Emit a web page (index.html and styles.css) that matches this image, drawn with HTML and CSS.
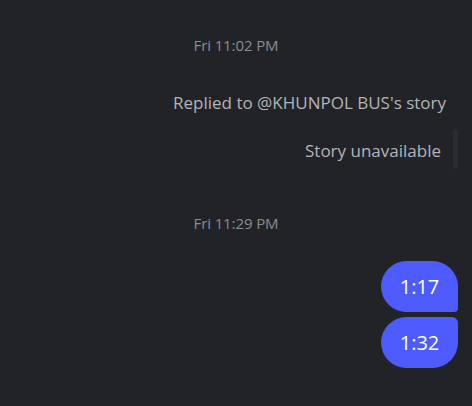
FILE: index.html
```html
<!DOCTYPE html>
<html>
<head>
    <title>Chat</title>
    <link rel="stylesheet" href="styles.css">
</head>
<body>
    <div class="chat">
        <div class="timestamp">Fri 11:02 PM</div>
        <div class="reply-note">Replied to @KHUNPOL BUS's story</div>
        <div class="story-row">
            <span class="story-text">Story unavailable</span>
            <span class="story-bar"></span>
        </div>
        <div class="timestamp second">Fri 11:29 PM</div>
        <div class="bubbles">
            <div class="bubble first">1:17</div>
            <div class="bubble last">1:32</div>
        </div>
    </div>
</body>
</html>
```

FILE: styles.css
```css
body {
    background-color: #222327;
    margin: 0;
    padding: 0;
    font-family: 'Open Sans', 'Noto Sans', sans-serif;
}

.chat {
    display: flex;
    flex-direction: column;
    padding: 34px 14px 0 0;
}

.timestamp {
    text-align: center;
    margin-right: -14px;
    color: #8b8c90;
    font-size: 15px;
    letter-spacing: -0.1px;
    line-height: 22px;
}

.timestamp.second {
    margin-top: 43px;
}

.reply-note {
    align-self: flex-end;
    margin-top: 35px;
    margin-right: 12px;
    color: #b3b4b8;
    font-size: 17px;
    line-height: 24px;
}

.story-row {
    align-self: flex-end;
    display: flex;
    align-items: center;
    gap: 12px;
    margin-top: 14px;
}

.story-text {
    color: #b3b4b8;
    font-size: 17px;
    line-height: 24px;
    padding-top: 4px;
}

.story-bar {
    width: 5px;
    height: 40px;
    background-color: #2a2c31;
    border-radius: 3px;
}

.bubbles {
    align-self: flex-end;
    display: flex;
    flex-direction: column;
    gap: 5px;
    margin-top: 27px;
}

.bubble {
    width: 77px;
    height: 51px;
    display: flex;
    align-items: center;
    justify-content: center;
    background-color: #4e5cff;
    color: #ffffff;
    font-size: 20px;
    border-radius: 26px;
}

.bubble.first {
    border-bottom-right-radius: 4px;
}

.bubble.last {
    border-top-right-radius: 6px;
}
```
